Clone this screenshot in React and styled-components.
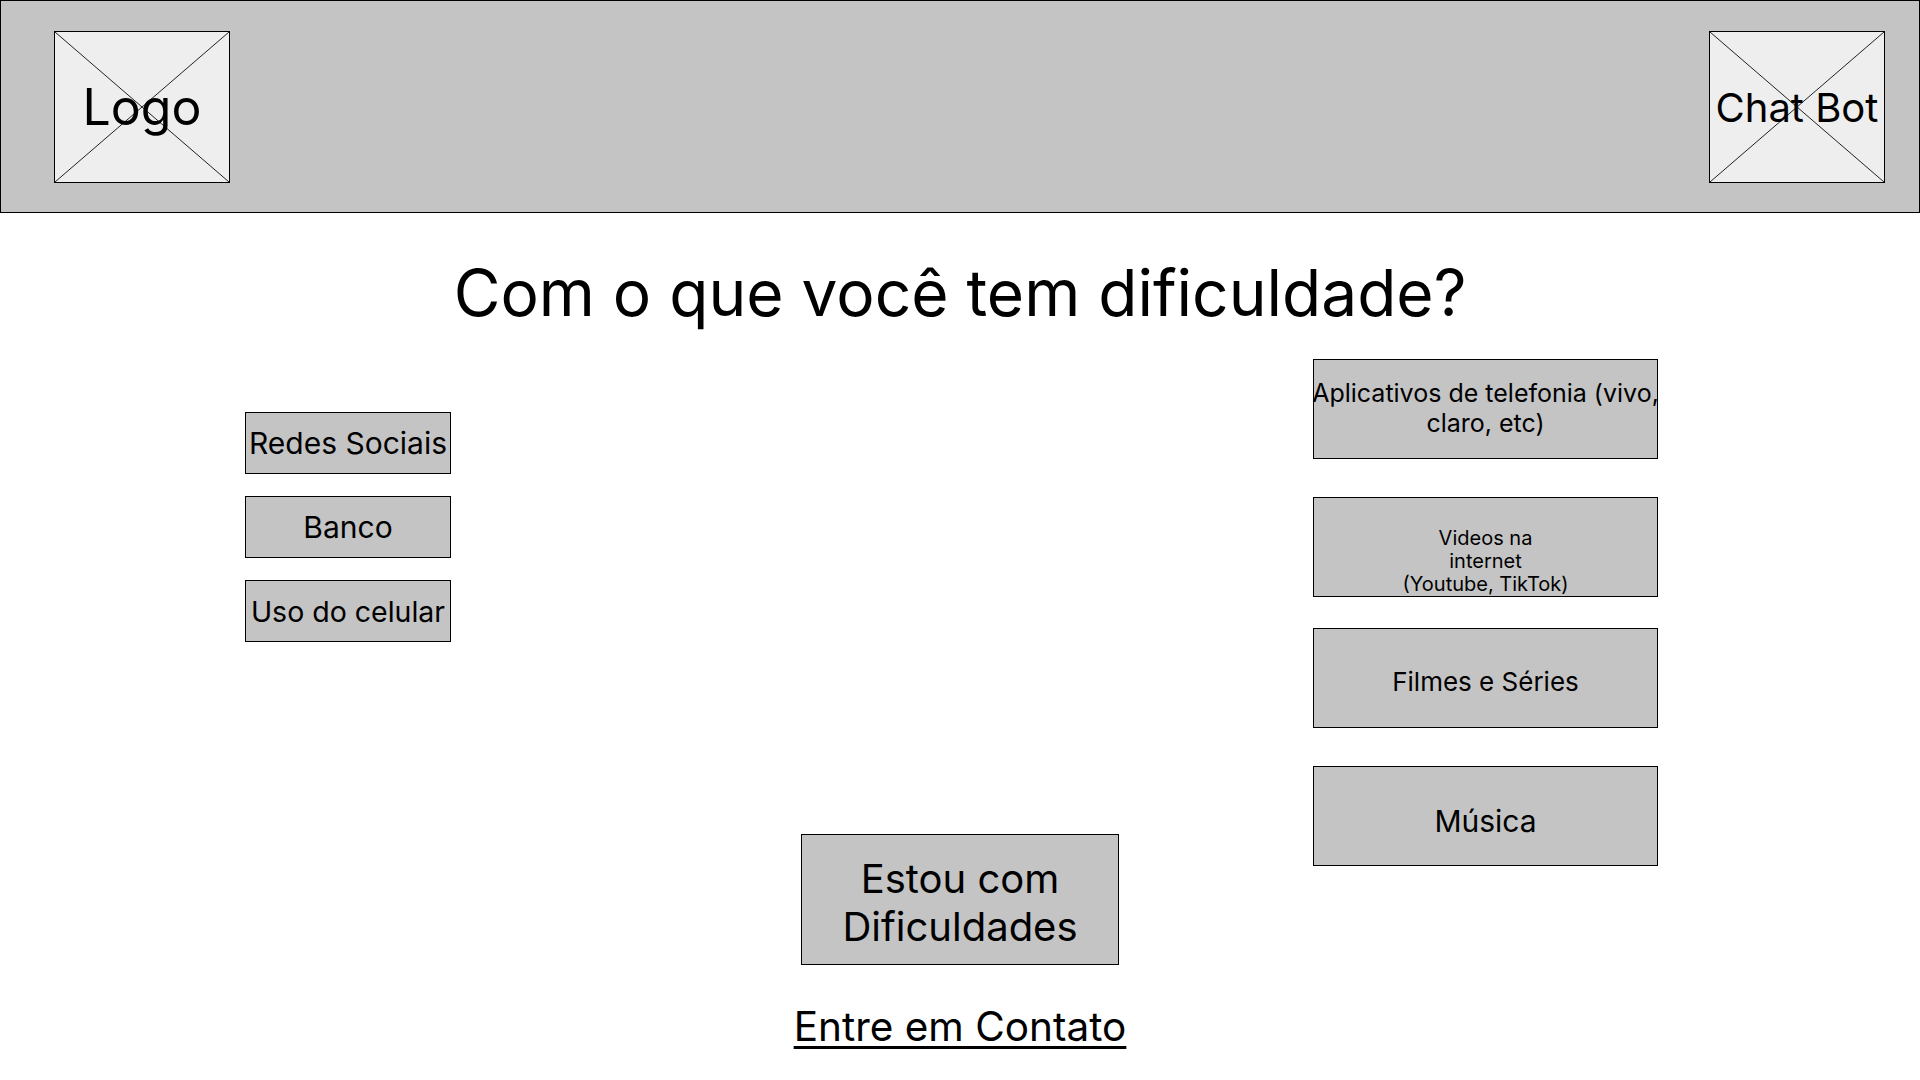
import React from "react";
import styled, { createGlobalStyle } from "styled-components";

const GlobalStyle = createGlobalStyle`
    body {
        margin: 0;
        background: #fff;
        font-family: Inter, "Noto Sans", sans-serif;
        color: #000;
    }
`;

const Header = styled.header`
    box-sizing: border-box;
    height: 213px;
    background-color: #c4c4c4;
    border: 1px solid #000;
    padding: 0 34px 0 53px;
    display: flex;
    align-items: center;
    justify-content: space-between;
`;

const Placeholder = styled.div`
    position: relative;
    box-sizing: border-box;
    width: 176px;
    height: 152px;
    padding-top: ${(props) => props.$drop || "0px"};
    background-color: #eeeeee;
    border: 1px solid #000;
    display: flex;
    align-items: center;
    justify-content: center;
    font-size: ${(props) => props.$size || "40px"};
    white-space: nowrap;
`;

const Cross = styled.svg`
    position: absolute;
    inset: 0;
    width: 100%;
    height: 100%;
`;

const Label = styled.span`
    position: relative;
`;

const Title = styled.h1`
    margin: 41px 0 0;
    font-size: 64px;
    font-weight: 400;
    line-height: 1.21;
    text-align: center;
`;

const Board = styled.main`
    margin-top: 28px;
    display: grid;
    grid-template-columns: 1fr 318px 1fr;
`;

const LeftColumn = styled.div`
    padding: 53px 0 0 245px;
    display: flex;
    flex-direction: column;
    gap: 22px;
`;

const RightColumn = styled.div`
    padding-left: 194px;
    display: flex;
    flex-direction: column;
`;

const CenterColumn = styled.div`
    padding-top: 475px;
    display: flex;
    flex-direction: column;
    align-items: center;
`;

const SmallButton = styled.button`
    box-sizing: border-box;
    width: 206px;
    height: 62px;
    padding: 0;
    background-color: #c4c4c4;
    border: 1px solid #000;
    font-family: inherit;
    font-size: ${(props) => props.$size || "30px"};
    color: #000;
    white-space: nowrap;
`;

const TopicButton = styled.button`
    box-sizing: border-box;
    width: 345px;
    height: 100px;
    margin-top: ${(props) => props.$top || "0px"};
    padding: ${(props) => props.$pad || "0"};
    background-color: #c4c4c4;
    border: 1px solid #000;
    font-family: inherit;
    font-size: ${(props) => props.$size || "26px"};
    line-height: ${(props) => props.$lh || "1.21"};
    color: #000;
    display: flex;
    flex-direction: column;
    align-items: center;
    justify-content: ${(props) => (props.$end ? "flex-end" : "center")};
    white-space: nowrap;
    overflow: visible;
`;

const HelpButton = styled.button`
    box-sizing: border-box;
    width: 318px;
    height: 131px;
    padding: 6px 0 0;
    background-color: #c4c4c4;
    border: 1px solid #000;
    font-family: inherit;
    font-size: 40px;
    line-height: 48px;
    color: #000;
`;

const ContactLink = styled.a`
    margin-top: 37px;
    font-size: 40.5px;
    line-height: 1.21;
    color: #000;
    white-space: nowrap;
    text-decoration: underline;
    text-decoration-thickness: 3px;
    text-underline-offset: 5px;
`;

const ImageBox = ({ children, size, drop }) => (
    <Placeholder $size={size} $drop={drop}>
        <Cross viewBox="0 0 100 100" preserveAspectRatio="none">
            <line x1="0" y1="0" x2="100" y2="100" stroke="#222" strokeWidth="1" vectorEffect="non-scaling-stroke" />
            <line x1="100" y1="0" x2="0" y2="100" stroke="#222" strokeWidth="1" vectorEffect="non-scaling-stroke" />
        </Cross>
        <Label>{children}</Label>
    </Placeholder>
);

const App = () => {
    return (
        <>
            <GlobalStyle />
            <Header>
                <ImageBox size="50px">Logo</ImageBox>
                <ImageBox size="40px" drop="2px">Chat Bot</ImageBox>
            </Header>
            <Title>Com o que você tem dificuldade?</Title>
            <Board>
                <LeftColumn>
                    <SmallButton>Redes Sociais</SmallButton>
                    <SmallButton>Banco</SmallButton>
                    <SmallButton $size="28.5px">Uso do celular</SmallButton>
                </LeftColumn>
                <CenterColumn>
                    <HelpButton>
                        Estou com
                        <br />
                        Dificuldades
                    </HelpButton>
                    <ContactLink href="#">Entre em Contato</ContactLink>
                </CenterColumn>
                <RightColumn>
                    <TopicButton $size="25px" $lh="30px" $pad="0 0 2px">
                        <span>Aplicativos de telefonia (vivo,</span>
                        <span>claro, etc)</span>
                    </TopicButton>
                    <TopicButton $top="38px" $size="20px" $lh="23px" $end>
                        <span>Videos na</span>
                        <span>internet</span>
                        <span>(Youtube, TikTok)</span>
                    </TopicButton>
                    <TopicButton $top="31px" $pad="7px 0 0">
                        Filmes e Séries
                    </TopicButton>
                    <TopicButton $top="38px" $size="30px" $pad="10px 0 0">
                        Música
                    </TopicButton>
                </RightColumn>
            </Board>
        </>
    );
};

export default App;
